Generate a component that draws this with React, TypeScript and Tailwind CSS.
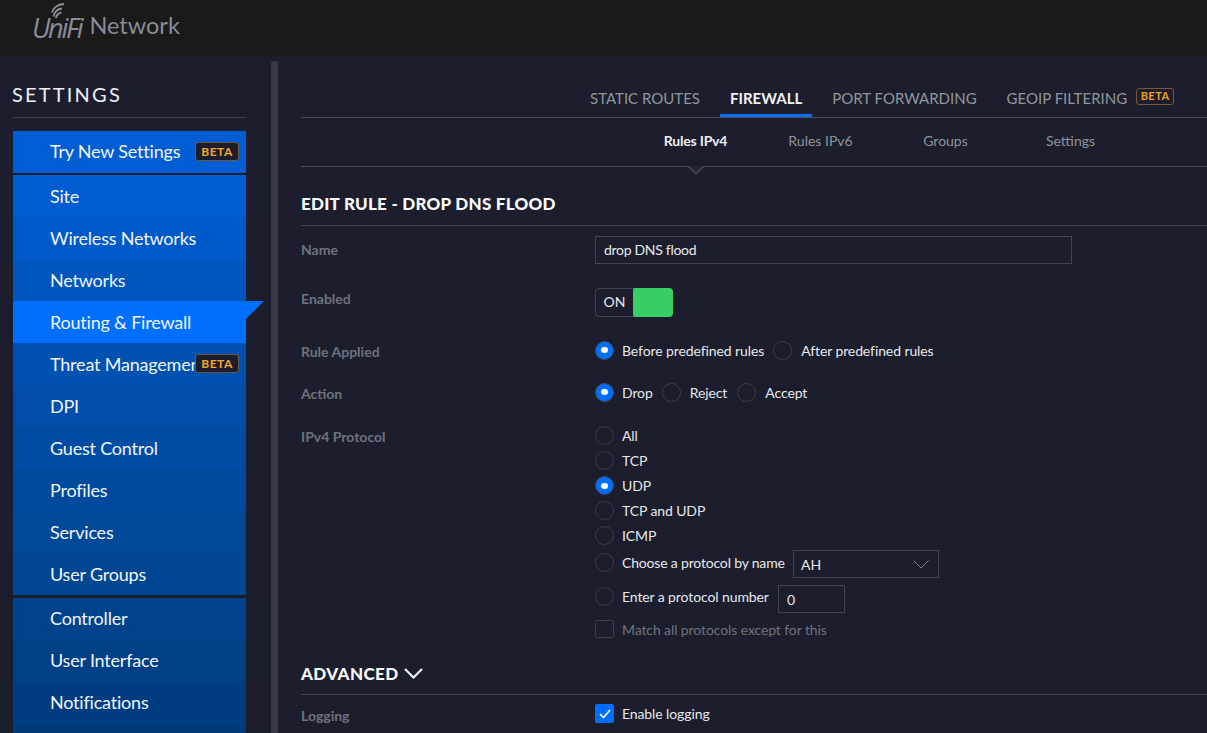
import React from "react";

const Beta = ({ small }: { small?: boolean }) => (
  <span
    className={
      small
        ? "flex h-[17px] w-[38px] items-center justify-center rounded-[3px] border border-[#7a5a2c] text-[11px] font-bold tracking-[0.5px] text-[#f39c1f]"
        : "flex h-[19px] w-[44px] items-center justify-center rounded-[3px] border border-[#6b5a45] bg-[#1c1e2d] text-[12px] font-bold tracking-[0.5px] text-[#f5a623]"
    }
  >
    BETA
  </span>
);

const NavItem = ({
  label,
  color,
  beta,
  active,
  raised,
}: {
  label: string;
  color: string;
  beta?: boolean;
  active?: boolean;
  raised?: boolean;
}) => (
  <div className={`relative flex h-[42px] items-center pl-[37px] text-[18px] tracking-[-0.2px] text-[#f2f5fb] ${color}`}>
    <span className={`${beta ? "w-[145px]" : "w-[196px]"} ${raised ? "pb-[2px]" : ""} shrink-0 overflow-hidden whitespace-nowrap`}>
      {label}
    </span>
    {beta && (
      <span className="absolute right-[7px] top-[11px]">
        <Beta />
      </span>
    )}
    {active && (
      <svg className="absolute left-[233px] top-0" width="18" height="18" viewBox="0 0 18 18">
        <polygon points="0,0 18,0 0,18" fill="#006fff" />
      </svg>
    )}
  </div>
);

const Sidebar = () => (
  <aside className="flex h-full w-[278px] shrink-0">
    <div className="w-[233px] ml-[13px] shrink-0">
      <div className="flex h-[62px] items-end border-b border-[#3c3f4e] pb-[11px] text-[20px] leading-[24px] tracking-[2.2px] text-[#eef0f4]">
        <span className="-ml-px">SETTINGS</span>
      </div>
      <div className="mt-[13px]">
        <NavItem label="Try New Settings" color="bg-[#005dd3]" beta raised />
      </div>
      <div className="mt-[2px]">
        <NavItem label="Site" color="bg-[#005cd1]" />
        <NavItem label="Wireless Networks" color="bg-[#0059c8]" />
        <NavItem label="Networks" color="bg-[#0056bf]" />
        <NavItem label="Routing & Firewall" color="bg-[#006fff]" active />
        <NavItem label="Threat Management" color="bg-[#0051b0]" beta />
        <NavItem label="DPI" color="bg-[#004eaa]" />
        <NavItem label="Guest Control" color="bg-[#004ca4]" />
        <NavItem label="Profiles" color="bg-[#004a9e]" />
        <NavItem label="Services" color="bg-[#004898]" />
        <NavItem label="User Groups" color="bg-[#004693]" />
      </div>
      <div className="mt-[3px]">
        <NavItem label="Controller" color="bg-[#00438d]" raised />
        <NavItem label="User Interface" color="bg-[#004087]" raised />
        <NavItem label="Notifications" color="bg-[#003d80]" raised />
        <NavItem label="" color="bg-[#003a79]" />
      </div>
    </div>
    <div className="ml-[25px] mt-[5px] h-full w-[7px] rounded-t-[3px] bg-[#373945]" />
  </aside>
);

const Radio = ({
  label,
  checked,
  wide,
  className,
}: {
  label: string;
  checked?: boolean;
  wide?: boolean;
  className?: string;
}) => (
  <label className={`flex items-center whitespace-nowrap text-[14px] tracking-[-0.1px] text-[#e6e8ec] ${className ?? ""}`}>
    {checked ? (
      <span className="flex h-[19px] w-[19px] shrink-0 items-center justify-center rounded-full border border-[#3d4a5e] bg-[#006fff]">
        <span className="h-[6px] w-[7px] rounded-full bg-white" />
      </span>
    ) : (
      <span className="h-[19px] w-[19px] shrink-0 rounded-full border border-[#3a3d4a]" />
    )}
    <span className={wide ? "ml-[9px]" : "ml-[8px]"}>{label}</span>
  </label>
);

const FormLabel = ({ children, className }: { children: React.ReactNode; className?: string }) => (
  <div className={`w-[294px] shrink-0 text-[14px] font-bold text-[#6f727d] ${className ?? ""}`}>{children}</div>
);

const App = () => (
  <div className="flex h-[733px] w-[1207px] flex-col overflow-hidden bg-[#1c1e2d] font-['Lato',sans-serif]">
    <header className="flex h-[56px] shrink-0 items-center bg-[#1a1a1a] pb-[5px] pl-[32px] text-[#8a8c99]">
      <span className="relative pr-[8px] pt-[4px] font-['Open_Sans',sans-serif] text-[27px] font-normal italic leading-none tracking-[-2.2px]">
        UniFi
        <svg className="absolute left-[19px] top-[-7px]" width="20" height="16" viewBox="0 0 20 16" fill="none" stroke="#8a8c99" strokeWidth="1.8">
          <path d="M2.5 13.5C3.5 9 6.5 6 11 5.5" />
          <path d="M0.8 9.5C2.5 4.5 6.5 1.5 13 1" />
          <path d="M4.8 15C5.5 12.5 7.5 10 10.5 9.5" />
        </svg>
      </span>
      <span className="text-[23.5px] leading-none">Network</span>
    </header>
    <div className="flex min-h-0 flex-1">
      <Sidebar />
      <main className="ml-[23px] min-w-0 flex-1">
        <nav className="flex h-[62px] items-end gap-[10px] border-b border-[#4a4c57] pl-[279px] text-[15px] uppercase text-[#8f979c]">
          <span className="flex h-[31px] items-start px-[10px] pt-[1px]">Static Routes</span>
          <span className="flex h-[31px] items-start border-b-[3px] border-[#006fff] px-[10px] pt-[1px] font-bold text-[#f2f3f5]">Firewall</span>
          <span className="flex h-[31px] items-start px-[10px] pt-[1px]">Port Forwarding</span>
          <span className="flex h-[31px] items-start px-[10px] pt-[1px]">
            GeoIP Filtering
            <span className="ml-[9px] mt-[1px]">
              <Beta small />
            </span>
          </span>
        </nav>
        <div className="relative flex h-[49px] items-center border-b border-[#4a4c4f] pb-[4px] pl-[332px] text-[14px] text-[#8f949a]">
          <span className="w-[125px] text-center font-bold tracking-[-0.2px] text-[#eceef0]">Rules IPv4</span>
          <span className="w-[125px] text-center">Rules IPv6</span>
          <span className="w-[125px] text-center">Groups</span>
          <span className="w-[125px] text-center">Settings</span>
          <svg className="absolute left-[386px] top-[48px]" width="18" height="9" viewBox="0 0 18 9">
            <polygon points="0,0 18,0 9,9" fill="#4a4c4f" />
            <polygon points="2,0 16,0 9,7" fill="#22252e" />
          </svg>
        </div>
        <h2 className="flex h-[59px] items-end border-b border-[#3e414d] pb-[11px] text-[17px] font-black leading-[20px] tracking-[0.25px] text-[#f8f9fa]">
          EDIT RULE - DROP DNS FLOOD
        </h2>
        <div className="mt-[10px] flex h-[28px] items-center">
          <FormLabel className="pb-[2px]">Name</FormLabel>
          <div className="flex h-[28px] w-[477px] items-center border border-[#3f4450] pb-[2px] pl-[8px] text-[14px] tracking-[-0.3px] text-[#e6e8ec]">
            drop DNS flood
          </div>
        </div>
        <div className="mt-[24px] flex h-[29px] items-start">
          <FormLabel>Enabled</FormLabel>
          <div className="flex h-[29px] w-[78px] rounded-[4px] border border-[#3f4450]">
            <span className="flex w-[37px] items-center justify-center pb-[2px] text-[14px] text-[#e6e8ec]">ON</span>
            <span className="-my-px -mr-px flex-1 rounded-r-[4px] rounded-l-[2px] bg-[#39ce62]" />
          </div>
        </div>
        <div className="mt-[24px] flex h-[20px] items-center">
          <FormLabel>Rule Applied</FormLabel>
          <div className="-mt-[2px] flex">
            <Radio label="Before predefined rules" checked />
            <Radio label="After predefined rules" wide className="ml-[9px]" />
          </div>
        </div>
        <div className="mt-[21px] flex h-[20px] items-center">
          <FormLabel className="pt-[2px]">Action</FormLabel>
          <Radio label="Drop" checked />
          <Radio label="Reject" wide className="ml-[9px]" />
          <Radio label="Accept" wide className="ml-[10px]" />
        </div>
        <div className="mt-[24px] flex items-start">
          <FormLabel>IPv4 Protocol</FormLabel>
          <div className="-mt-[3px] flex flex-col">
            <Radio label="All" className="h-[25px]" />
            <Radio label="TCP" className="h-[25px]" />
            <Radio label="UDP" checked className="h-[25px]" />
            <Radio label="TCP and UDP" className="h-[25px]" />
            <Radio label="ICMP" className="h-[25px]" />
            <div className="mt-[2px] flex h-[28px] items-center">
              <Radio label="Choose a protocol by name" className="-mt-[4px] w-[190px] tracking-[-0.18px]!" />
              <div className="ml-[8px] flex h-[28px] w-[146px] items-center justify-between border border-[#3f4450] pl-[7px] pr-[9px] text-[14px] text-[#e6e8ec]">
                AH
                <svg width="16" height="9" viewBox="0 0 16 9" fill="none" stroke="#7d818c" strokeWidth="1">
                  <path d="M0.5 0.5L8 8L15.5 0.5" />
                </svg>
              </div>
            </div>
            <div className="mt-[7px] flex h-[28px] items-center">
              <Radio label="Enter a protocol number" className="-mt-[6px] w-[175px]" />
              <div className="ml-[8px] flex h-[28px] w-[67px] items-center border border-[#3f4450] pl-[8px] text-[14px] text-[#e6e8ec]">
                0
              </div>
            </div>
            <div className="mt-[7px] flex h-[18px] items-center text-[14px] tracking-[-0.1px] text-[#6f727d]">
              <span className="h-[18px] w-[19px] rounded-[2px] border border-[#3a3d4a]" />
              <span className="ml-[8px]">Match all protocols except for this</span>
            </div>
          </div>
        </div>
        <h2 className="mt-[24px] flex h-[33px] items-start border-b border-[#3e414d] pt-[1px] text-[17px] font-black leading-[22px] tracking-[0.4px] text-[#f8f9fa]">
          ADVANCED
          <svg className="ml-[5px] mt-[5px]" width="19" height="11" viewBox="0 0 19 11" fill="none" stroke="#f0f1f3" strokeWidth="2.2">
            <path d="M1 1L9.5 9.5L18 1" />
          </svg>
        </h2>
        <div className="mt-[10px] flex h-[20px] items-center">
          <FormLabel>Logging</FormLabel>
          <label className="-mt-[3px] flex items-center text-[14px] tracking-[-0.1px] text-[#e6e8ec]">
            <span className="flex h-[19px] w-[19px] items-center justify-center rounded-[2px] bg-[#006fff]">
              <svg width="12" height="10" viewBox="0 0 12 10" fill="none" stroke="#fff" strokeWidth="1.6">
                <path d="M1 5L4.5 8.5L11 1" />
              </svg>
            </span>
            <span className="ml-[8px]">Enable logging</span>
          </label>
        </div>
      </main>
    </div>
  </div>
);

export default App;
